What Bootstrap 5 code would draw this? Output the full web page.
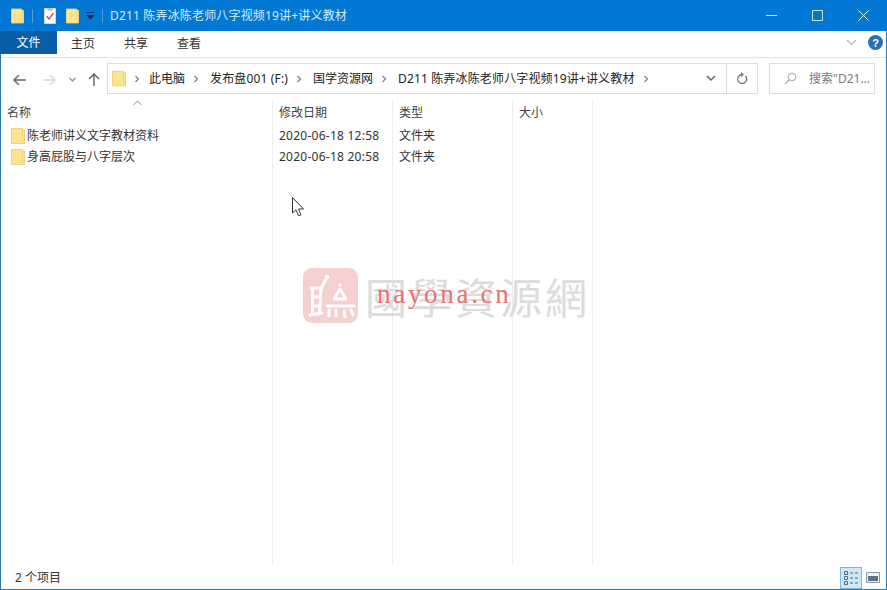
<!DOCTYPE html>
<html lang="zh-CN">
<head>
  <meta charset="UTF-8">
  <meta name="viewport" content="width=device-width, initial-scale=1">
  <title>D211 资源管理器</title>
  <link href="https://cdn.jsdelivr.net/npm/bootstrap@5.3.3/dist/css/bootstrap.min.css" rel="stylesheet">
  <style>
    html, body { height: 100%; overflow: hidden; }
    body { font-family: "Noto Sans", "Noto Sans CJK SC", sans-serif; font-size: 12px; color: #222; background: #fff; }
    .win { height: 590px; width: 887px; border-left: 1px solid #2a78b0; border-right: 1px solid #2a78b0; border-bottom: 1px solid #2a78b0; position: relative; }
    .titlebar { height: 31px; background: #0078d4; color: #d5ebfa; margin: 0 -1px; padding-left: 11px; flex: none; }
    .qsep { width: 1px; height: 14px; background: #4f9fdc; }
    .q1 { margin-left: 8px; } .q2 { margin-left: 11px; } .q3 { margin-left: 10px; } .q4 { margin-left: 7px; } .q5 { margin-left: 7px; }
    .titletext { margin-left: 7px; letter-spacing: .17px; }
    .wbtns { margin-right: 1px; }
    .wbtn { width: 46px; height: 31px; }
    .tabs { height: 23px; flex: none; margin-left: -1px; }
    .tab-file { width: 57px; background: #0a5ea6; color: #fff; padding-top: 1px; }
    .tab-item { padding: 2px 15px 0 14px; color: #333; }
    .tabs-wrap { height: 27px; border-bottom: 1px solid #e3e3e3; flex: none; }
    .helpbox { height: 23px; padding-right: 3px; gap: 11px; }
    .navrow { height: 40px; padding: 5px 0 2px 0; flex: none; }
    .navicons { width: 106px; padding-left: 12px; }
    .nav-fwd { margin-left: 17px; } .nav-drop { margin-left: 13px; } .nav-up { margin-left: 12px; }
    .addr { width: 651px; height: 31px; border: 1px solid #dcdcdc; background: #fff; }
    .crumbs { padding-left: 4px; }
    .crumb-sep { margin: 0 11px 0 9px; }
    .crumb-first { margin-right: 9px; }
    .crumb-long { letter-spacing: .15px; }
    .addr-end { width: 31px; border-left: 1px solid #dcdcdc; }
    .addr-drop { width: 31px; }
    .searchbox { width: 106px; height: 31px; border: 1px solid #dcdcdc; margin-left: 11px; color: #7a7a7a; padding-left: 14px; }
    .listing { flex: 1 1 auto; margin-top: 3px; min-height: 0; }
    .colm { border-right: 1px solid #ececec; height: 464px; }
    .c1 { width: 272px; } .c2 { width: 120px; } .c3 { width: 120px; } .c4 { width: 80px; }
    .headcell { height: 24px; padding-left: 6px; color: #444; padding-top: 3px; }
    .sorter { left: 132px; top: -1px; }
    .cell { height: 21px; padding-left: 6px; color: #333; }
    .c1 .cell { padding-left: 10px; gap: 2px; }
    .datecell { letter-spacing: .25px; }
    .statusbar { height: 23px; padding-left: 14px; flex: none; color: #333; }
    .viewgroup { padding-right: 2px; }
    .viewbtn { width: 22px; height: 22px; }
    .viewbtn-on { background: #cde8f8; border: 1px solid #7db9de; }
    .seal { left: 302px; top: 268px; width: 55px; height: 55px; border-radius: 9px; background: #f6cfcf; }
    .wm-cn { left: 364px; top: 268px; font-family: "Noto Sans CJK TC", sans-serif; font-weight: 400; font-size: 42px; line-height: 56px; letter-spacing: 3px; color: #dcdcdc; white-space: nowrap; }
    .wm-en { left: 376px; top: 279px; font-family: "Liberation Serif", serif; font-size: 27px; line-height: 30px; letter-spacing: 2.7px; color: #ea7074; white-space: nowrap; }
    .ptr { left: 291px; top: 197px; }
  </style>
</head>
<body>
<svg width="0" height="0" class="position-absolute">
  <symbol id="folder" viewBox="0 0 14 16">
    <path d="M.5.5H11.5V2H13.5V15.5H.5Z" fill="#fce391" stroke="#f0d27c"/>
    <path d="M11.5.5V13.5H13.5" fill="none" stroke="#ecd48a"/>
  </symbol>
</svg>

<div class="win d-flex flex-column">
  <div class="titlebar d-flex align-items-center">
    <svg width="13" height="16"><use href="#folder"/></svg>
    <span class="qsep q1"></span>
    <svg class="q2" width="12" height="16" viewBox="0 0 12 16"><path d="M.5.5H11.500V15.500H.5Z" fill="#fff" stroke="#cfd8e0"/><path d="M2.500 8l2.500 3 4.500-6" fill="none" stroke="#c8553d" stroke-width="1.300"/><path d="M3.500.5H8.500V2.500H3.500Z" fill="#aab4bd"/></svg>
    <svg class="q3" width="13" height="16"><use href="#folder"/></svg>
    <svg class="q4" width="9" height="10" viewBox="0 0 9 10"><path d="M1 1.500H8" stroke="#1f2a4d"/><path d="M.5 4H8.500L4.500 8.500Z" fill="#1f2a4d"/></svg>
    <span class="qsep q5"></span>
    <span class="titletext">D211 陈弄冰陈老师八字视频19讲+讲义教材</span>
    <div class="wbtns ms-auto d-flex">
      <div class="wbtn d-flex align-items-center justify-content-center"><svg width="11" height="11"><path d="M0 5.500H11" stroke="#cfe6f7"/></svg></div>
      <div class="wbtn d-flex align-items-center justify-content-center"><svg width="11" height="11"><path d="M.5.5H10.500V10.500H.5Z" fill="none" stroke="#cfe6f7"/></svg></div>
      <div class="wbtn d-flex align-items-center justify-content-center"><svg width="11" height="11"><path d="M.5.5L10.500 10.500M10.500.5L.5 10.500" stroke="#e4f1fb"/></svg></div>
    </div>
  </div>

  <div class="tabs-wrap d-flex">
    <div class="tabs d-flex">
      <div class="tab-file d-flex align-items-center justify-content-center">文件</div>
      <div class="tab-item d-flex align-items-center">主页</div>
      <div class="tab-item d-flex align-items-center">共享</div>
      <div class="tab-item d-flex align-items-center">查看</div>
    </div>
    <div class="helpbox ms-auto d-flex align-items-center">
      <svg width="11" height="7"><path d="M1 1l4.500 4.500L10 1" fill="none" stroke="#b5b5b5" stroke-width="1.200"/></svg>
      <svg width="15" height="15" viewBox="0 0 15 15"><circle cx="7.500" cy="7.500" r="7.500" fill="#2a6fb5"/><text x="7.500" y="11.500" text-anchor="middle" font-size="11" font-weight="700" fill="#fff" font-family="Liberation Sans">?</text></svg>
    </div>
  </div>

  <div class="navrow d-flex align-items-stretch">
    <div class="navicons d-flex align-items-center">
      <svg width="13" height="12" viewBox="0 0 13 12"><path d="M6 1L1 6l5 5M1 6H13" fill="none" stroke="#6b6b6b" stroke-width="1.500"/></svg>
      <svg class="nav-fwd" width="13" height="12" viewBox="0 0 13 12"><path d="M7 1l5 5-5 5M12 6H0" fill="none" stroke="#d8d8d8" stroke-width="1.500"/></svg>
      <svg class="nav-drop" width="7" height="5" viewBox="0 0 7 5"><path d="M.5 1l3 3 3-3" fill="none" stroke="#8a8a8a" stroke-width="1.200"/></svg>
      <svg class="nav-up" width="12" height="13" viewBox="0 0 12 13"><path d="M1 6l5-5 5 5M6 1V13" fill="none" stroke="#6b6b6b" stroke-width="1.500"/></svg>
    </div>
    <div class="addr d-flex align-items-center">
      <div class="crumbs d-flex align-items-center flex-grow-1">
        <svg width="14" height="17" viewBox="0 0 14 16"><use href="#folder"/></svg>
        <span class="crumb-sep crumb-first"><svg width="5" height="8"><path d="M.5 1l3 3-3 3" fill="none" stroke="#808080" stroke-width="1.200"/></svg></span>
        <span>此电脑</span>
        <span class="crumb-sep"><svg width="5" height="8"><path d="M.5 1l3 3-3 3" fill="none" stroke="#808080" stroke-width="1.200"/></svg></span>
        <span class="crumb-long">发布盘001 (F:)</span>
        <span class="crumb-sep"><svg width="5" height="8"><path d="M.5 1l3 3-3 3" fill="none" stroke="#808080" stroke-width="1.200"/></svg></span>
        <span>国学资源网</span>
        <span class="crumb-sep"><svg width="5" height="8"><path d="M.5 1l3 3-3 3" fill="none" stroke="#808080" stroke-width="1.200"/></svg></span>
        <span class="crumb-long">D211 陈弄冰陈老师八字视频19讲+讲义教材</span>
        <span class="crumb-sep"><svg width="5" height="8"><path d="M.5 1l3 3-3 3" fill="none" stroke="#808080" stroke-width="1.200"/></svg></span>
      </div>
      <div class="addr-drop d-flex align-items-center justify-content-center"><svg width="10" height="7"><path d="M1 1l4 4 4-4" fill="none" stroke="#666" stroke-width="1.500"/></svg></div>
      <div class="addr-end h-100 d-flex align-items-center justify-content-center"><svg width="12" height="13" viewBox="0 0 12 13"><path d="M9.500 4A4.500 4.500 0 1 1 6 2.500" fill="none" stroke="#777" stroke-width="1.300"/><path d="M5 0l3 2.500L5 5Z" fill="#777"/></svg></div>
    </div>
    <div class="searchbox d-flex align-items-center gap-2">
      <svg width="13" height="13" viewBox="0 0 13 13"><circle cx="8" cy="5" r="3.800" fill="none" stroke="#a8a8a8"/><path d="M5 8L1 12" stroke="#a8a8a8" stroke-width="1.200"/></svg>
      <span class="ms-1 text-nowrap">搜索"D21...</span>
    </div>
  </div>

  <div class="listing d-flex">
    <div class="colm c1">
      <div class="headcell position-relative">名称
        <svg class="sorter position-absolute" width="9" height="6"><path d="M.5 5L4.500 1l4 4" fill="none" stroke="#8a8a8a"/></svg>
      </div>
      <div class="cell d-flex align-items-center"><svg width="14" height="16"><use href="#folder"/></svg><span>陈老师讲义文字教材资料</span></div>
      <div class="cell d-flex align-items-center"><svg width="14" height="16"><use href="#folder"/></svg><span>身高屁股与八字层次</span></div>
    </div>
    <div class="colm c2">
      <div class="headcell">修改日期</div>
      <div class="cell datecell d-flex align-items-center">2020-06-18 12:58</div>
      <div class="cell datecell d-flex align-items-center">2020-06-18 20:58</div>
    </div>
    <div class="colm c3">
      <div class="headcell">类型</div>
      <div class="cell d-flex align-items-center">文件夹</div>
      <div class="cell d-flex align-items-center">文件夹</div>
    </div>
    <div class="colm c4">
      <div class="headcell">大小</div>
    </div>
  </div>

  <div class="statusbar d-flex align-items-center">
    <span>2 个项目</span>
    <div class="viewgroup ms-auto d-flex align-items-center">
      <div class="viewbtn viewbtn-on d-flex align-items-center justify-content-center">
        <svg width="16" height="14" viewBox="0 0 16 14"><g fill="none" stroke="#5a6b7a"><path d="M1.500.5h3v3h-3zM1.500 5.500h3v3h-3zM1.500 10.500h3v3h-3z"/><path d="M7 2h3M12 2h3M7 7h3M12 7h3M7 12h3M12 12h3"/></g></svg>
      </div>
      <div class="viewbtn d-flex align-items-center justify-content-center">
        <svg width="14" height="11" viewBox="0 0 14 11"><path d="M.5.5h13v10H.5z" fill="#eef3f6" stroke="#8a98a3"/><path d="M2 4h10v5H2z" fill="#5d7384"/></svg>
      </div>
    </div>
  </div>

  <div class="seal position-absolute">
    <svg width="55" height="55" viewBox="0 0 55 55"><g fill="none" stroke="#fff" stroke-width="3" stroke-linecap="round">
      <path d="M23 11L18 21M8 20H19M9.500 20V46M18 21L16.500 46M9.500 29H17.500M9.500 38H17M7 47L19 45"/>
      <path d="M37 21L31 31M37 21L43 31M31 31H43M24 38H51M26 42V48M33 42V48M41 43L42 49M48 42L50 47"/>
    </g><circle cx="24" cy="9" r="2.300" fill="#fff"/><circle cx="37" cy="17" r="1.800" fill="#fff"/></svg>
  </div>
  <div class="wm-cn position-absolute">國學資源網</div>
  <div class="wm-en position-absolute">nayona.cn</div>
  <svg class="ptr position-absolute" width="13" height="20" viewBox="0 0 13 20"><path d="M.5.5V16l3.500-3.200 2.500 6 2.500-1-2.500-5.800H11.500Z" fill="#fff" stroke="#333"/></svg>
</div>
</body>
</html>
